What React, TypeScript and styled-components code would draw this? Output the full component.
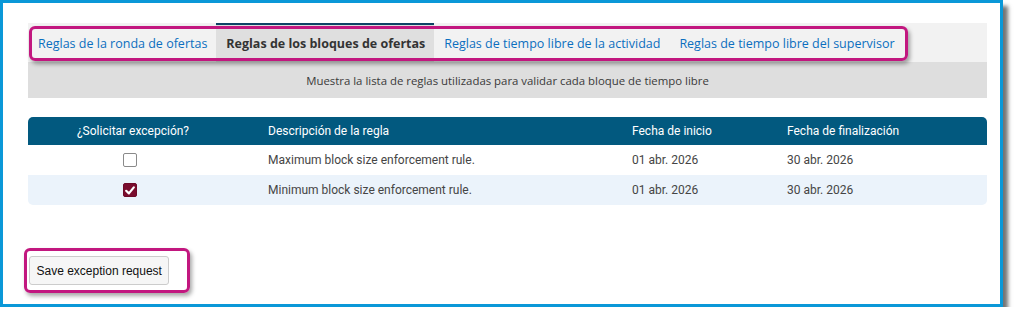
import React from 'react';
import styled, { createGlobalStyle } from 'styled-components';

const GlobalStyle = createGlobalStyle`
  html, body {
    margin: 0;
    padding: 0;
    background: #ffffff;
  }
`;

const tabs = [
  { label: 'Reglas de la ronda de ofertas', active: false },
  { label: 'Reglas de los bloques de ofertas', active: true },
  { label: 'Reglas de tiempo libre de la actividad', active: false },
  { label: 'Reglas de tiempo libre del supervisor', active: false },
];

const rules = [
  { checked: false, description: 'Maximum block size enforcement rule.', start: '01 abr. 2026', end: '30 abr. 2026' },
  { checked: true, description: 'Minimum block size enforcement rule.', start: '01 abr. 2026', end: '30 abr. 2026' },
];

const CheckMark = () => (
  <svg width="10" height="9" viewBox="0 0 10 9">
    <path d="M1.2 4.8 L3.9 7.4 L8.8 1.4" fill="none" stroke="#ffffff" strokeWidth="2.2" strokeLinecap="round" strokeLinejoin="round" />
  </svg>
);

const App = () => {
  return (
    <>
      <GlobalStyle />
      <Frame>
        <TabBar>
          {tabs.map((tab) => (
            <Tab key={tab.label} $active={tab.active}>
              {tab.label}
            </Tab>
          ))}
        </TabBar>
        <Description>Muestra la lista de reglas utilizadas para validar cada bloque de tiempo libre</Description>

        <Table>
          <HeaderRow>
            <HeaderCell $center>¿Solicitar excepción?</HeaderCell>
            <HeaderCell>Descripción de la regla</HeaderCell>
            <HeaderCell>Fecha de inicio</HeaderCell>
            <HeaderCell>Fecha de finalización</HeaderCell>
          </HeaderRow>
          {rules.map((rule, i) => (
            <BodyRow key={rule.description} $striped={i % 2 === 1}>
              <BodyCell $center>
                <CheckBox $checked={rule.checked}>{rule.checked && <CheckMark />}</CheckBox>
              </BodyCell>
              <BodyCell>{rule.description}</BodyCell>
              <BodyCell>{rule.start}</BodyCell>
              <BodyCell>{rule.end}</BodyCell>
            </BodyRow>
          ))}
        </Table>

        <SaveButton>Save exception request</SaveButton>

        <Highlight $left={26} $top={23} $width={879} $height={35} />
        <Highlight $left={21} $top={245} $width={166} $height={45} />
      </Frame>
    </>
  );
};

const Frame = styled.div`
  position: relative;
  box-sizing: border-box;
  width: 1003px;
  height: 307px;

  padding: 20px 13px 0 25px;

  background: #ffffff;
  border: 3px solid #0a98d8;
  box-shadow: 5px 6px 4px rgba(0, 0, 0, 0.55);
`;

const TabBar = styled.div`
  display: flex;
  height: 39px;

  background: #f2f2f2;
`;

const Tab = styled.div<{ $active: boolean }>`
  display: flex;
  align-items: center;
  box-sizing: border-box;

  padding: 0 9px 0 10px;

  font-family: 'Open Sans', 'Liberation Sans', sans-serif;
  font-size: 12.5px;
  font-weight: ${(p) => (p.$active ? 700 : 400)};
  color: ${(p) => (p.$active ? '#333333' : '#0b6fbf')};
  background: ${(p) => (p.$active ? '#dfdfdf' : 'transparent')};
  border-top: 2px solid ${(p) => (p.$active ? '#0d4466' : 'transparent')};
  white-space: nowrap;
`;

const Description = styled.div`
  display: flex;
  align-items: center;
  justify-content: center;
  height: 36px;

  font-family: 'Open Sans', 'Liberation Sans', sans-serif;
  font-size: 11.4px;
  color: #3a3a3a;
  background: #dedede;
`;

const Table = styled.div`
  display: flex;
  flex-direction: column;

  margin-top: 19px;

  font-family: Roboto, 'Liberation Sans', sans-serif;
  font-size: 12px;
`;

const HeaderRow = styled.div`
  display: grid;
  grid-template-columns: 230px 364px 155px 1fr;
  align-items: center;
  height: 28px;

  background: #02597f;
  border-radius: 5px 5px 0 0;
`;

const HeaderCell = styled.div<{ $center?: boolean }>`
  padding: ${(p) => (p.$center ? '0 20px 0 0' : '0 10px')};

  color: #ffffff;
  text-align: ${(p) => (p.$center ? 'center' : 'left')};
`;

const BodyRow = styled.div<{ $striped: boolean }>`
  display: grid;
  grid-template-columns: 230px 364px 155px 1fr;
  align-items: center;
  height: 30px;

  background: ${(p) => (p.$striped ? '#ebf3fb' : '#ffffff')};
  border-radius: ${(p) => (p.$striped ? '0 0 5px 5px' : '0')};
`;

const BodyCell = styled.div<{ $center?: boolean }>`
  display: flex;
  justify-content: ${(p) => (p.$center ? 'center' : 'flex-start')};

  padding: ${(p) => (p.$center ? '0 26px 0 0' : '0 10px')};

  color: #454545;
`;

const CheckBox = styled.span<{ $checked: boolean }>`
  display: flex;
  align-items: center;
  justify-content: center;
  box-sizing: border-box;
  width: 14px;
  height: 14px;

  border: 1px solid ${(p) => (p.$checked ? '#6e0a28' : '#8a8a8a')};
  border-radius: 2px;
  background: ${(p) => (p.$checked ? '#7a0d2e' : '#ffffff')};
`;

const SaveButton = styled.button`
  box-sizing: border-box;
  height: 29px;

  margin: 51px 0 0 1px;
  padding: 0 6.5px;

  font-family: 'Liberation Sans', Arial, sans-serif;
  font-size: 12px;
  color: #111111;
  background: #f6f6f6;
  border: 1px solid #cccccc;
  border-radius: 3px;
`;

const Highlight = styled.div<{ $left: number; $top: number; $width: number; $height: number }>`
  position: absolute;
  left: ${(p) => p.$left}px;
  top: ${(p) => p.$top}px;
  box-sizing: border-box;
  width: ${(p) => p.$width}px;
  height: ${(p) => p.$height}px;

  border: 3px solid #c2177f;
  border-radius: 6px;
  box-shadow: 2px 3px 4px rgba(0, 0, 0, 0.35);
  pointer-events: none;
`;

export default App;
